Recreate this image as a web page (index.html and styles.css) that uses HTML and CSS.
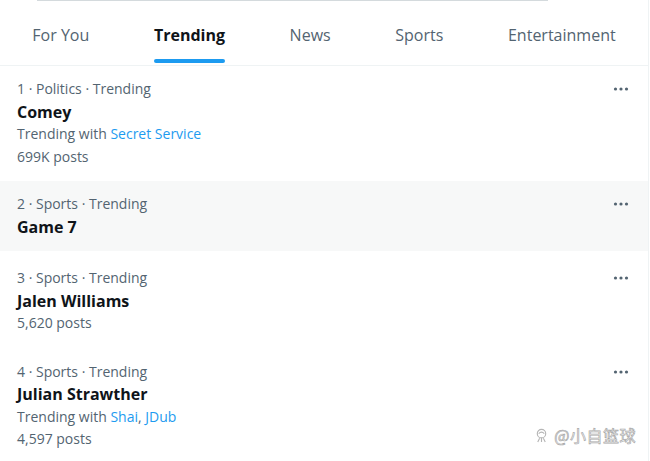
FILE: index.html
```html
<!DOCTYPE html>
<html>
<head>
<meta charset="utf-8">
<link rel="stylesheet" href="styles.css">
</head>
<body>
<div class="page">
  <div class="search-edge"></div>
  <nav class="tabs">
    <div class="tab"><span class="tab-label">For You</span></div>
    <div class="tab active"><span class="tab-label">Trending<span class="indicator"></span></span></div>
    <div class="tab"><span class="tab-label">News</span></div>
    <div class="tab"><span class="tab-label">Sports</span></div>
    <div class="tab"><span class="tab-label">Entertainment</span></div>
  </nav>

  <div class="trend">
    <div class="trend-body">
      <div class="meta">1 · Politics · Trending</div>
      <div class="title">Comey</div>
      <div class="meta">Trending with <span class="link">Secret Service</span></div>
      <div class="meta">699K posts</div>
    </div>
    <svg class="more" viewBox="0 0 20 20"><circle cx="4.5" cy="10" r="1.6"/><circle cx="10" cy="10" r="1.6"/><circle cx="15.5" cy="10" r="1.6"/></svg>
  </div>

  <div class="trend hover">
    <div class="trend-body">
      <div class="meta">2 · Sports · Trending</div>
      <div class="title">Game 7</div>
    </div>
    <svg class="more" viewBox="0 0 20 20"><circle cx="4.5" cy="10" r="1.6"/><circle cx="10" cy="10" r="1.6"/><circle cx="15.5" cy="10" r="1.6"/></svg>
  </div>

  <div class="trend loose">
    <div class="trend-body">
      <div class="meta">3 · Sports · Trending</div>
      <div class="title">Jalen Williams</div>
      <div class="meta">5,620 posts</div>
    </div>
    <svg class="more" viewBox="0 0 20 20"><circle cx="4.5" cy="10" r="1.6"/><circle cx="10" cy="10" r="1.6"/><circle cx="15.5" cy="10" r="1.6"/></svg>
  </div>

  <div class="trend">
    <div class="trend-body">
      <div class="meta">4 · Sports · Trending</div>
      <div class="title">Julian Strawther</div>
      <div class="meta">Trending with <span class="link">Shai</span>, <span class="link">JDub</span></div>
      <div class="meta">4,597 posts</div>
    </div>
    <svg class="more" viewBox="0 0 20 20"><circle cx="4.5" cy="10" r="1.6"/><circle cx="10" cy="10" r="1.6"/><circle cx="15.5" cy="10" r="1.6"/></svg>
  </div>

  <div class="watermark">
    <svg class="wm-logo" viewBox="0 0 16 16"><circle cx="8" cy="6" r="4.5" fill="none" stroke="#b5b5b5" stroke-width="1.2"/><path d="M5 6 Q8 3 11 6 M6 11 L4 15 M10 11 L12 15 M8 10.5 L8 15" fill="none" stroke="#b5b5b5" stroke-width="1.2"/></svg>
    <span class="wm-text">@小自篮球</span>
  </div>
</div>
</body>
</html>
```
FILE: styles.css
```css
html, body {
  margin: 0;
  padding: 0;
  background: #ffffff;
}

body {
  font-family: "Open Sans", "Noto Sans CJK SC", sans-serif;
  color: #0f1419;
}

.page {
  position: relative;
  width: 648px;
  height: 461px;
  border-right: 1px solid #eff3f4;
  overflow: hidden;
}

.search-edge {
  height: 1px;
  margin: 0 100px 0 37px;
  background: #d4dadd;
}

.tabs {
  display: flex;
  height: 64px;
  border-bottom: 1px solid #eff3f4;
}

.tab {
  flex: 1 1 auto;
  display: flex;
  justify-content: center;
  align-items: center;
  padding: 4px 32px 0 32px;
  font-size: 16px;
  font-weight: 500;
  color: #536471;
}

.tab-label {
  position: relative;
}

.tab.active {
  font-weight: 700;
  color: #0f1419;
}

.indicator {
  position: absolute;
  left: 0;
  right: 0;
  top: 35px;
  height: 4px;
  border-radius: 2px;
  background: #1d9bf0;
}

.trend {
  display: flex;
  align-items: flex-start;
  padding: 12px 16px 13px 17px;
}

.trend.hover {
  background: #f7f8f8;
}

.trend.loose {
  padding-top: 16px;
  padding-bottom: 14px;
}

.trend-body {
  flex: 1;
}

.meta {
  font-size: 14px;
  line-height: 22.5px;
  color: #536471;
}

.title {
  font-size: 16px;
  font-weight: 700;
  line-height: 22.5px;
  color: #0f1419;
}

.link {
  color: #1d9bf0;
}

.more {
  width: 20px;
  height: 20px;
  margin-top: 1px;
  margin-right: 1px;
  fill: #536471;
}

.watermark {
  position: absolute;
  right: 12px;
  bottom: 14px;
  display: flex;
  align-items: center;
  gap: 5px;
}

.wm-logo {
  width: 15px;
  height: 15px;
}

.wm-text {
  font-family: "Noto Sans CJK SC", sans-serif;
  font-size: 16px;
  color: #ffffff;
  -webkit-text-stroke: 0.7px #a8a8a8;
  letter-spacing: 0.5px;
}
```
